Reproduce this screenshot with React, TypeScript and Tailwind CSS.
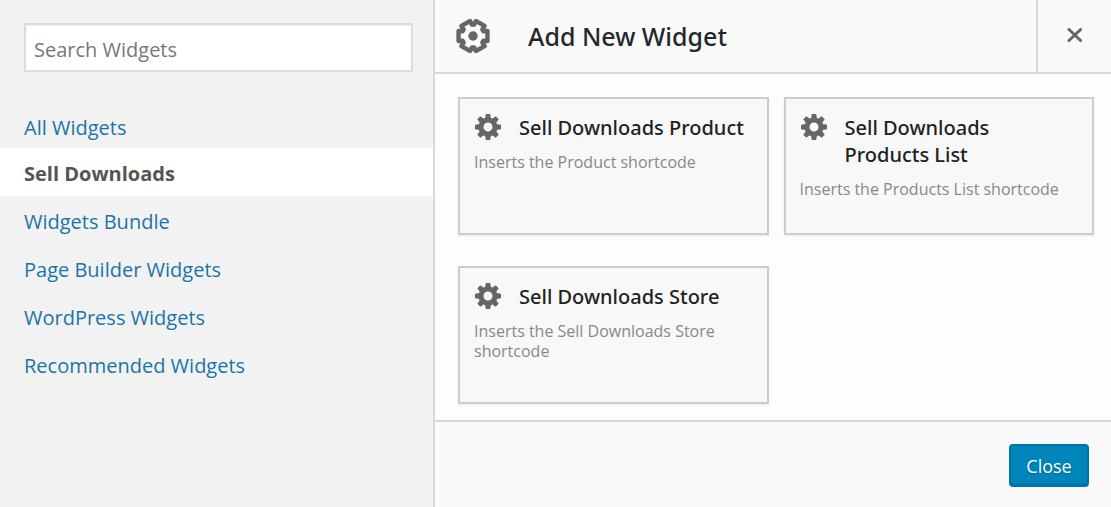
import React from 'react'

const categories = [
  'All Widgets',
  'Sell Downloads',
  'Widgets Bundle',
  'Page Builder Widgets',
  'WordPress Widgets',
  'Recommended Widgets',
]

const widgets = [
  { title: 'Sell Downloads Product', description: 'Inserts the Product shortcode' },
  { title: 'Sell Downloads Products List', description: 'Inserts the Products List shortcode' },
  { title: 'Sell Downloads Store', description: 'Inserts the Sell Downloads Store shortcode' },
]

const Gear = () => (
  <svg viewBox="-14 -14 28 28" className="size-7 shrink-0" fill="#666" aria-hidden="true">
    <circle r="7" fill="none" stroke="#666" strokeWidth="5" />
    {[0, 45, 90, 135, 180, 225, 270, 315].map((angle) => (
      <path key={angle} d="M-2.9-8.4 -2.2-13H2.2L2.9-8.4Z" transform={`rotate(${angle})`} />
    ))}
  </svg>
)

const logoPoints = [0, 60, 120, 180, 240, 300]
  .flatMap((angle) => [[11.4, angle - 25], [15.3, angle - 19], [15.3, angle + 19], [11.4, angle + 25]])
  .map(([r, a]) => `${r * Math.cos((a * Math.PI) / 180)},${r * Math.sin((a * Math.PI) / 180)}`)
  .join(' ')

const BuilderLogo = () => (
  <svg viewBox="-17 -17 34 34" className="size-[34px] shrink-0" aria-hidden="true">
    <polygon points={logoPoints} fill="none" stroke="#666" strokeWidth="4.4" strokeLinejoin="round" />
    <circle r="4.7" fill="#666" />
  </svg>
)

const Sidebar = () => (
  <aside className="w-[435px] shrink-0 border-r-2 border-[#d8d8d8] bg-[#f2f2f2] pt-[23px]">
    <div className="pl-6 pr-5">
      <input
        type="search"
        aria-label="Search Widgets"
        placeholder="Search Widgets"
        className="h-[49px] w-full border-2 border-[#ddd] bg-white px-2 pt-1 text-[20px] shadow-[inset_0_1px_2px_rgba(0,0,0,0.07)] placeholder:text-[#777]"
      />
    </div>
    <nav className="mt-[30px]">
      <ul>
        {categories.map((name) => (
          <li key={name} className="group">
            <a
              href="#"
              className={
                name === 'Sell Downloads'
                  ? 'block bg-white px-6 pt-[10px] pb-[6px] text-[20px] leading-8 font-bold text-[#555]'
                  : 'block px-6 pt-[10px] pb-[6px] text-[20px] leading-8 text-[#1a75a8] group-first:pb-1'
              }
            >
              {name}
            </a>
          </li>
        ))}
      </ul>
    </nav>
  </aside>
)

const WidgetCard = ({ title, description }: { title: string; description: string }) => (
  <li className="min-h-[138px] border-2 border-[#ccc] bg-[#f8f8f8] px-[14px] pt-[14px] shadow-[0_1px_2px_rgba(0,0,0,0.08)]">
    <div className="flex items-start gap-[17px]">
      <Gear />
      <h3 className="pt-px pr-1 font-['Noto_Sans',sans-serif] text-[20px] leading-[27px] font-medium text-[#222]">{title}</h3>
    </div>
    <p className="mt-[11px] text-[16px] leading-5 text-[#888]">{description}</p>
  </li>
)

const App = () => {
  return (
    <div className="flex min-h-screen bg-[#fdfdfd] font-['Open_Sans','Noto_Sans',sans-serif]">
      <Sidebar />
      <main className="flex min-w-0 flex-1 flex-col">
        <header className="flex h-[74px] items-stretch border-b-2 border-[#d8d8d8] bg-[#fafafa]">
          <div className="flex flex-1 items-center gap-[38px] pl-[21px]">
            <BuilderLogo />
            <h1 className="font-['Noto_Sans',sans-serif] text-[25px] leading-8 font-medium text-[#23282d]">Add New Widget</h1>
          </div>
          <button type="button" aria-label="Close dialog" className="flex w-[75px] items-center justify-center border-l-2 border-[#d8d8d8]">
            <svg viewBox="0 0 16 16" className="size-4" stroke="#666" strokeWidth="3" strokeLinecap="round" aria-hidden="true">
              <path d="M2 1.5l11.6 11M13.6 1.5l-11.6 11" />
            </svg>
          </button>
        </header>
        <ul className="grid flex-1 grid-cols-2 content-start gap-x-[15px] gap-y-[31px] pt-[23px] pr-[17px] pb-4 pl-[23px]">
          {widgets.map((widget) => (
            <WidgetCard key={widget.title} {...widget} />
          ))}
        </ul>
        <footer className="flex h-[87px] items-start justify-end border-t-2 border-[#d8d8d8] bg-[#fafafa] pt-[22px] pr-[22px]">
          <button
            type="button"
            className="h-[43px] w-20 rounded-[4px] border-2 border-b-4 border-[#0073aa] bg-[#0085ba] pt-[3px] text-[18px] text-white [text-shadow:0_1px_2px_#006799]"
          >
            Close
          </button>
        </footer>
      </main>
    </div>
  )
}

export default App
